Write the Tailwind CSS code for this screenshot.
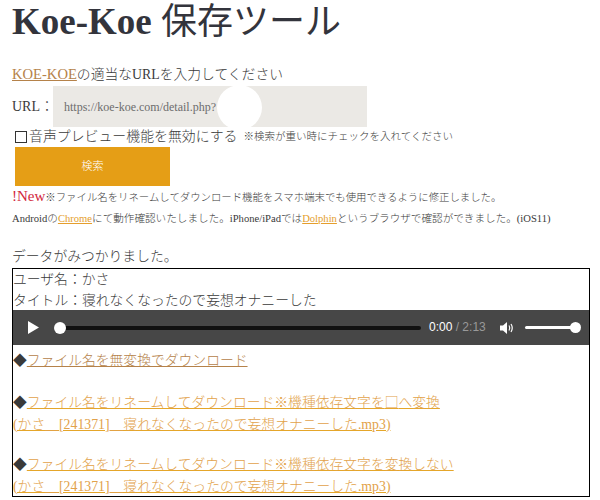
<!DOCTYPE html>
<html lang="ja">
<head>
    <meta charset="UTF-8">
    <title>Koe-Koe 保存ツール</title>
    <script src="https://cdn.jsdelivr.net/npm/@tailwindcss/browser@4"></script>
</head>
<body class="bg-white overflow-hidden h-[500px] text-[#3a3a3a] font-['Liberation_Serif','Noto_Sans_CJK_JP',serif] font-light">
    <div class="relative pl-3 pr-2.5">
        <h1 class="text-[37px] leading-[44px] font-bold text-[#33343c]">Koe-Koe <span class="text-[36px] font-normal">保存ツール</span></h1>

        <p class="mt-[19px] text-[13.8px] leading-[22px]"><a href="#" class="text-[14.6px] text-[#b5824a] underline">KOE-KOE</a>の適当なURLを入力してください</p>

        <div class="flex items-center h-[41px]">
            <span class="text-[14px] w-[41px]">URL：</span>
            <div class="w-[314px] h-[41px] bg-[#ebe9e5] pl-[11px] flex items-center text-[12px] text-[#6d6d6d]">https://koe-koe.com/detail.php?</div>
        </div>
        <div class="absolute left-[217px] top-[85px] w-[45px] h-[45px] rounded-full bg-white"></div>

        <div class="flex items-center h-[20px]">
            <span class="ml-[3px] w-[12px] h-[12px] border border-[#333] mr-[2px]"></span>
            <span class="text-[13.9px]">音声プレビュー機能を無効にする</span>
            <span class="ml-[6px] text-[10.5px]">※検索が重い時にチェックを入れてください</span>
        </div>

        <button class="block ml-[3px] w-[155px] h-[39px] bg-[#e59e16] text-white text-[11px]">検索</button>

        <p class="text-[10.4px] leading-[21px]"><span class="text-[15px] text-[#d2263c]">!New</span>※ファイル名をリネームしてダウンロード機能をスマホ端末でも使用できるように修正しました。</p>
        <p class="text-[10.6px] leading-[22px]">Androidの<a href="#" class="text-[#e59e2c] underline">Chrome</a>にて動作確認いたしました。iPhone/iPadでは<a href="#" class="text-[#e59e2c] underline">Dolphin</a>というブラウザで確認ができました。(iOS11)</p>

        <p class="mt-[16px] text-[13.8px] leading-[22px]">データがみつかりました。</p>

        <div class="border border-black h-[229px] overflow-hidden text-[13.8px] leading-[21px]">
            <p>ユーザ名：かさ</p>
            <p class="h-[20px]">タイトル：寝れなくなったので妄想オナニーした</p>
            <div class="flex items-center h-[35px] bg-[#474747] text-[12px]">
                <svg class="ml-[15px] w-[11px] h-[13px]" viewBox="0 0 11 13"><path d="M0 0 L11 6.5 L0 13 Z" fill="#fff"/></svg>
                <div class="relative ml-[15px] w-[367px] h-[4px] bg-[#111] rounded-full">
                    <span class="absolute left-0 top-[-4px] w-[12px] h-[12px] bg-white rounded-full"></span>
                </div>
                <span class="ml-[8px] text-white font-['Liberation_Sans',sans-serif] font-normal">0:00 <span class="text-[#999]">/ 2:13</span></span>
                <svg class="ml-[14px] w-[15px] h-[14px]" viewBox="0 0 15 14" fill="none"><path d="M0 4.5 H3 L7 1 V13 L3 9.5 H0 Z" fill="#fff"/><path d="M9 4.5 Q10.5 7 9 9.5 M11 3 Q13.5 7 11 11" stroke="#fff" stroke-width="1.2"/></svg>
                <div class="relative ml-[10px] w-[50px] h-[3px] bg-white rounded-full">
                    <span class="absolute right-[-6px] top-[-4px] w-[11px] h-[11px] bg-white rounded-full"></span>
                </div>
            </div>
            <div class="mt-[5px]">
                <p class="leading-[22px]">◆<a href="#" class="text-[#b5824a] underline">ファイル名を無変換でダウンロード</a></p>
                <p class="mt-[19px] leading-[21.5px]">◆<a href="#" class="text-[#e2a24a] underline decoration-[#e5a62a]">ファイル名をリネームしてダウンロード※機種依存文字を<span class="font-['Noto_Sans_CJK_JP',serif]">□</span>へ変換<br>(かさ__[241371]__寝れなくなったので妄想オナニーした.mp3)</a></p>
                <p class="mt-[19px] leading-[21.5px]">◆<a href="#" class="text-[#e2a24a] underline decoration-[#e5a62a]">ファイル名をリネームしてダウンロード※機種依存文字を変換しない<br>(かさ__[241371]__寝れなくなったので妄想オナニーした.mp3)</a></p>
            </div>
        </div>
    </div>
</body>
</html>
